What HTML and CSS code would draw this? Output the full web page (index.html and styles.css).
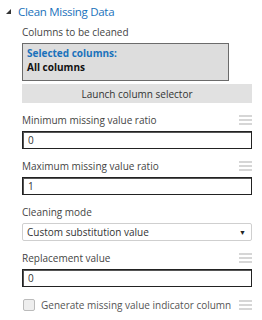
FILE: index.html
```html
<html lang="en">
  <head>
    <meta charset="UTF-8" />
    <title>Clean Missing Data</title>
    <link rel="stylesheet" href="styles.css">
  </head>
  <body>
    <div class="panel">
      <h2 class="title"><span class="caret"></span>Clean Missing Data</h2>

      <div class="field first">
        <div class="label-row">
          <span>Columns to be cleaned</span>
        </div>
        <div class="columns-box">
          <div class="selected">Selected columns:</div>
          <div class="all">All columns</div>
        </div>
        <button class="launch">Launch column selector</button>
      </div>

      <div class="field">
        <div class="label-row">
          <span>Minimum missing value ratio</span>
          <span class="grip"><i></i><i></i><i></i></span>
        </div>
        <input class="text-input" type="text" value="0" />
      </div>

      <div class="field">
        <div class="label-row">
          <span>Maximum missing value ratio</span>
          <span class="grip"><i></i><i></i><i></i></span>
        </div>
        <input class="text-input" type="text" value="1" />
      </div>

      <div class="field">
        <div class="label-row">
          <span>Cleaning mode</span>
        </div>
        <div class="select">
          <span>Custom substitution value</span>
          <span class="arrow">&#9660;</span>
        </div>
      </div>

      <div class="field">
        <div class="label-row">
          <span>Replacement value</span>
          <span class="grip"><i></i><i></i><i></i></span>
        </div>
        <input class="text-input" type="text" value="0" />
      </div>

      <div class="check-row">
        <span class="checkbox"></span>
        <span class="check-label">Generate missing value indicator column</span>
        <span class="grip"><i></i><i></i><i></i></span>
      </div>
    </div>
  </body>
</html>
```

FILE: styles.css
```css
body {
  margin: 0;
  background: white;
  font-family: "Open Sans", sans-serif;
  color: #444;
}
.panel {
  width: 230px;
  padding: 4px 0 0 22px;
}
.title {
  position: relative;
  margin: 0 0 0 -4px;
  font-size: 11.5px;
  letter-spacing: -0.3px;
  font-weight: normal;
  color: #1a72bb;
  line-height: 16px;
}
.caret {
  position: absolute;
  left: -12px;
  top: 5px;
  width: 0;
  height: 0;
  border-left: 5px solid transparent;
  border-bottom: 5px solid #333;
}
.field {
  margin-top: 9px;
}
.field.first {
  margin-top: 4px;
}
.label-row {
  display: flex;
  justify-content: space-between;
  align-items: center;
  font-size: 10px;
  line-height: 16px;
  height: 16px;
  margin-bottom: 3px;
}
.grip {
  display: flex;
  flex-direction: column;
  gap: 2px;
  width: 13px;
}
.grip i {
  display: block;
  height: 2px;
  background: #d6d6d6;
}
.columns-box {
  width: 207px;
  height: 38px;
  background: #ddd;
  border: 1px solid #6b6b6b;
  font-size: 10px;
  font-weight: bold;
  line-height: 14px;
  padding: 2px 0 0 4px;
  box-sizing: border-box;
}
.selected {
  color: #1a72bb;
}
.all {
  color: #111;
}
.launch {
  display: block;
  width: 100%;
  height: 19px;
  margin-top: 3px;
  background: #e1e1e1;
  border: 0;
  font-family: "Open Sans", sans-serif;
  font-size: 10px;
  color: #333;
  padding: 0;
}
.text-input {
  display: block;
  width: 100%;
  height: 18px;
  box-sizing: border-box;
  border: 1px solid #222;
  box-shadow: inset 1px 1px 0 #555;
  font-family: "Open Sans", sans-serif;
  font-size: 10px;
  color: #333;
  padding: 0 5px;
  outline: none;
}
.select {
  display: flex;
  justify-content: space-between;
  align-items: center;
  height: 18px;
  box-sizing: border-box;
  border: 1px solid #cfcfcf;
  border-radius: 2px;
  font-size: 10px;
  color: #333;
  padding: 0 5px 0 4px;
}
.arrow {
  font-size: 7px;
  color: #222;
}
.check-row {
  display: flex;
  align-items: center;
  height: 16px;
  margin-top: 10px;
  font-size: 10px;
}
.checkbox {
  width: 10px;
  height: 10px;
  border: 1px solid #bbb;
  background: #eee;
  border-radius: 2px;
  margin-left: 1px;
}
.check-label {
  flex: 1;
  margin-left: 6px;
  color: #555;
}
```
